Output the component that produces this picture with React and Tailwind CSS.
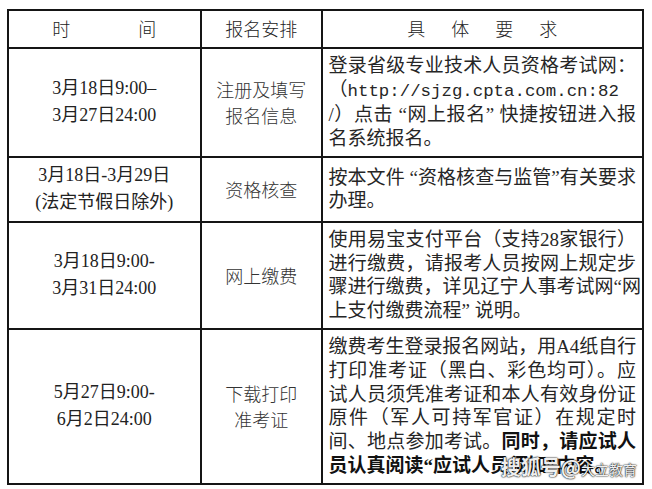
const serif = "font-['Liberation_Serif','Noto_Sans_CJK_SC',serif]";
const cjk = "font-['Noto_Sans_CJK_SC','Liberation_Serif',sans-serif]";

function Lines({ lines, last = [] }) {
	return (
		<div className={`${serif} text-[19px] leading-[23.7px] text-[#262626] w-full`}>
			{lines.map((l, i) => (
				<div
					key={i}
					className={
						last.includes(i)
							? "text-left whitespace-nowrap"
							: "text-justify [text-align-last:justify] whitespace-nowrap"
					}
				>
					{l}
				</div>
			))}
		</div>
	);
}

function TimeCell({ a, b }) {
	return (
		<div className={`bg-white flex flex-col items-center justify-center ${serif} text-[18px] leading-[27px] text-[#222]`}>
			<div>{a}</div>
			<div>{b}</div>
		</div>
	);
}

function StepCell({ children }) {
	return (
		<div className={`bg-white flex flex-col items-center justify-center ${cjk} font-light text-[18px] leading-[26px] text-[#333]`}>
			{children}
		</div>
	);
}

function ReqCell({ children, className = "" }) {
	return (
		<div className={`bg-white flex items-center pl-[6px] pr-[6px] ${className}`}>
			{children}
		</div>
	);
}

export default function App() {
	return (
		<div className="w-[652px] h-[489px] bg-white pl-[7px] pt-[9px]">
			<div className="grid grid-cols-[191.5px_119.5px_319.5px] grid-rows-[36.5px_107.5px_63.5px_105.5px_153.5px] gap-[1.5px] p-[1.5px] bg-[#151515] w-fit">
				{/* header */}
				<div className={`bg-white flex items-center justify-center gap-[68px] ${cjk} font-light text-[18px] text-[#222]`}>
					<span>时</span>
					<span>间</span>
				</div>
				<div className={`bg-white flex items-center justify-center ${cjk} font-light text-[18px] text-[#222]`}>
					报名安排
				</div>
				<div className={`bg-white flex items-center justify-center gap-[26px] ${cjk} font-light text-[18px] text-[#222]`}>
					<span>具</span>
					<span>体</span>
					<span>要</span>
					<span>求</span>
				</div>

				{/* row 1 */}
				<TimeCell a="3月18日9:00–" b="3月27日24:00" />
				<StepCell>
					<div>注册及填写</div>
					<div>报名信息</div>
				</StepCell>
				<ReqCell>
					<Lines
						lines={[
							"登录省级专业技术人员资格考试网：",
							<span key="u">
								（<span className="font-['Liberation_Mono',monospace] text-[17.4px]">http://sjzg.cpta.com.cn:82</span>
							</span>,
							"/）点击 “网上报名” 快捷按钮进入报",
							"名系统报名。",
						]}
						last={[1, 3]}
					/>
				</ReqCell>

				{/* row 2 */}
				<TimeCell a="3月18日-3月29日" b="(法定节假日除外)" />
				<StepCell>资格核查</StepCell>
				<ReqCell>
					<Lines lines={["按本文件 “资格核查与监管”有关要求", "办理。"]} last={[1]} />
				</ReqCell>

				{/* row 3 */}
				<TimeCell a="3月18日9:00-" b="3月31日24:00" />
				<StepCell>网上缴费</StepCell>
				<ReqCell>
					<Lines
						lines={[
							"使用易宝支付平台（支持28家银行）",
							"进行缴费，请报考人员按网上规定步",
							"骤进行缴费，详见辽宁人事考试网“网",
							"上支付缴费流程” 说明。",
						]}
						last={[3]}
					/>
				</ReqCell>

				{/* row 4 */}
				<LastRow />
			</div>
		</div>
	);
}

function LastRow() {
	return (
		<>
			<TimeCell a="5月27日9:00-" b="6月2日24:00" />
			<StepCell>
				<div>下载打印</div>
				<div>准考证</div>
			</StepCell>
			<ReqCell className="relative">
				<Lines
					lines={[
						<span key="a" className="tracking-[-0.2px]">缴费考生登录报名网站，用A4纸自行</span>,
						"打印准考证（黑白、彩色均可）。应",
						"试人员须凭准考证和本人有效身份证",
						"原件（军人可持军官证）在规定时",
						<span key="b">
							间、地点参加考试。<b className="font-bold text-[#111]">同时，请应试人</b>
						</span>,
						<b key="c" className="font-bold text-[#111]">员认真阅读“应试人员须知”内容。</b>,
					]}
					last={[5]}
				/>
				{/* watermark */}
				<div className={`absolute right-[5px] bottom-[6px] flex items-baseline ${cjk} text-white/95 [text-shadow:0_0_2px_#000,0_0_1px_#000]`}>
					<span className="text-[20px] font-bold leading-none">搜狐号@</span>
					<span className="text-[14px] leading-none">大立教育</span>
				</div>
			</ReqCell>
		</>
	);
}
